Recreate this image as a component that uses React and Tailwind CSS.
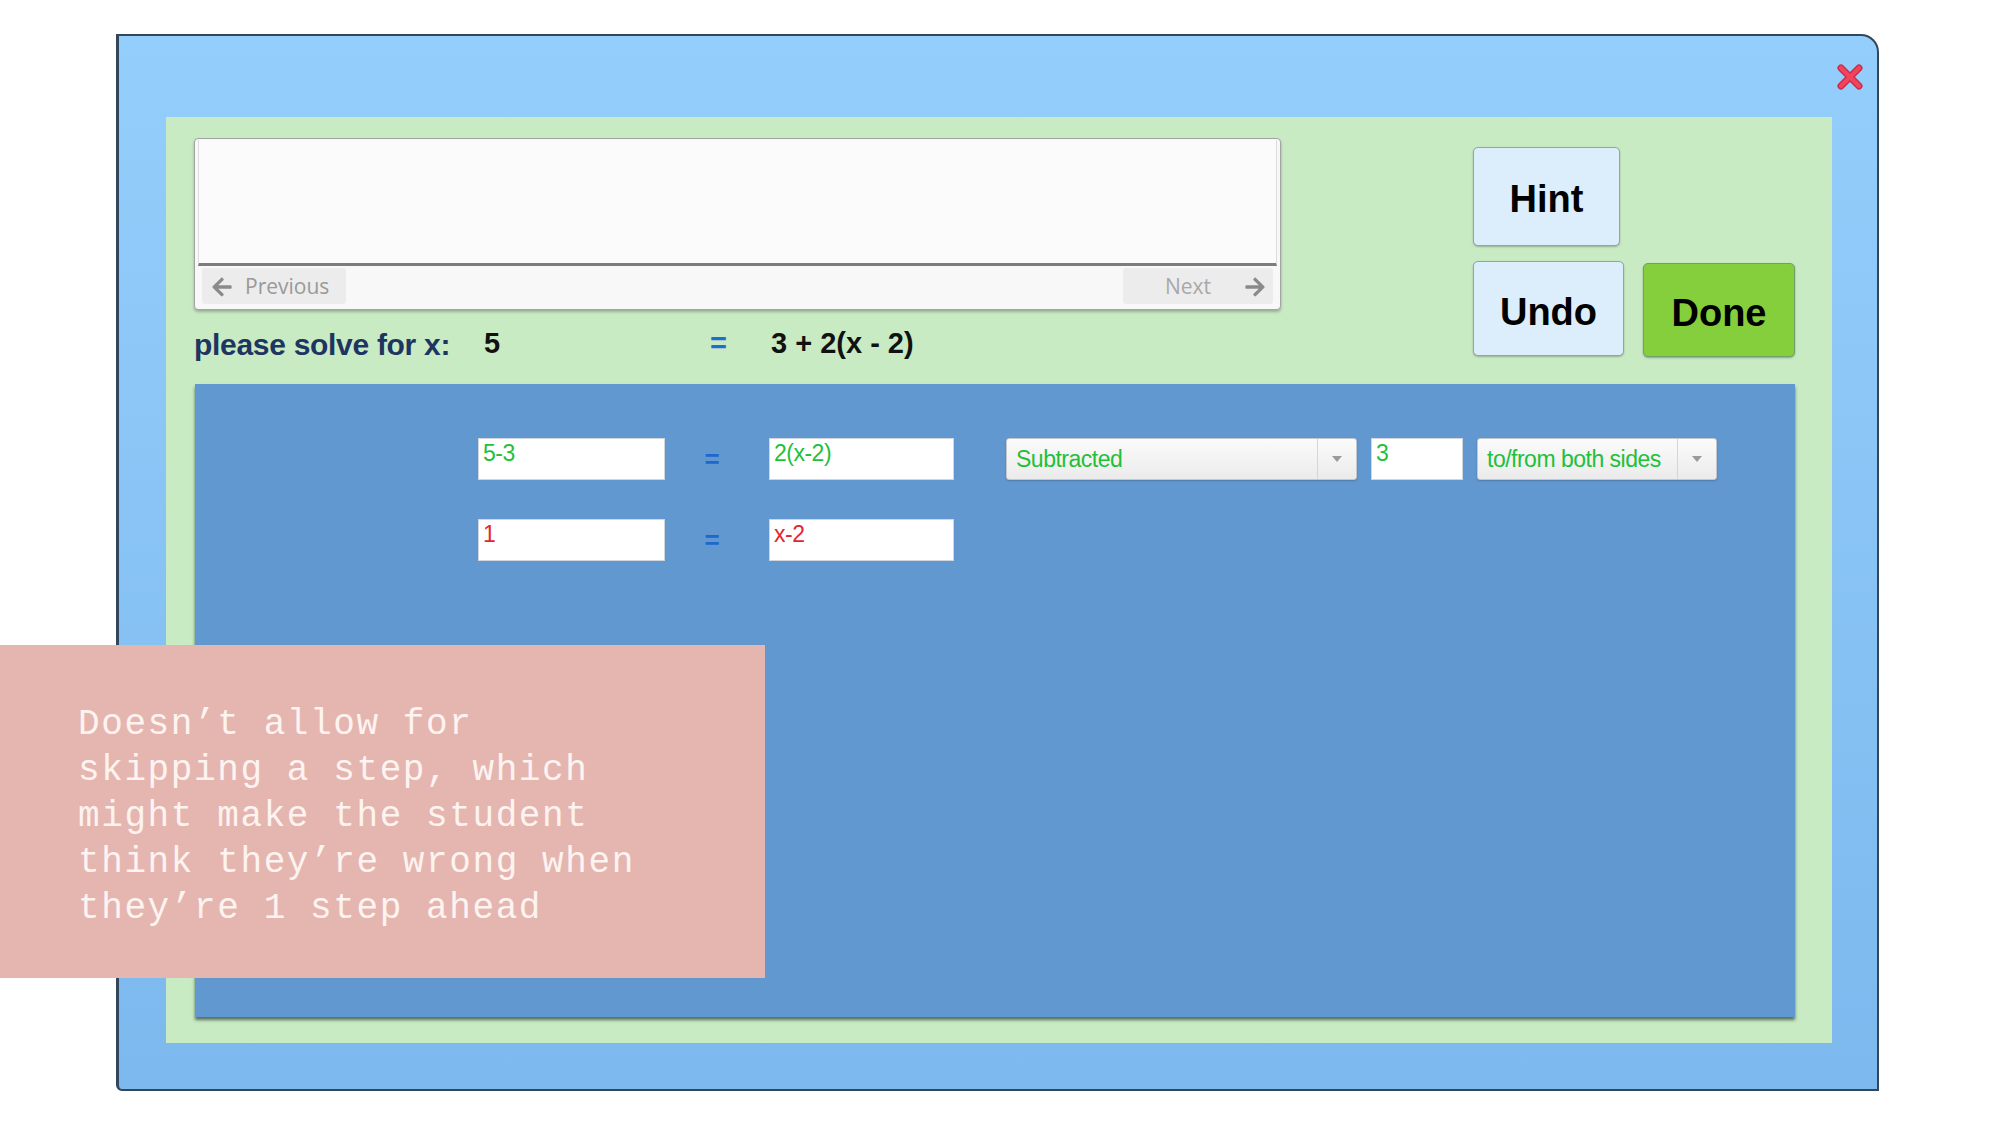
import { FaArrowLeft, FaArrowRight } from "react-icons/fa";

function Field({ w, text, color }) {
  return (
    <div
      className={`${w} h-[42px] shrink-0 bg-white border border-[#cfd6dd] pl-[4px] pt-[2px] text-[23px] leading-[25px] tracking-[-0.5px] font-['Liberation_Sans',sans-serif] ${color}`}
    >
      {text}
    </div>
  );
}

function Select({ w, text }) {
  return (
    <div
      className={`${w} h-[42px] shrink-0 flex items-stretch rounded-[3px] border border-[#c4c8cc] bg-linear-to-b from-[#fbfbfb] to-[#ebebeb] shadow-[0_1px_2px_rgba(0,0,0,0.2)]`}
    >
      <div className="flex-1 flex items-center pl-[9px] text-[23px] text-[#1fc03a] tracking-[-0.5px] font-['Liberation_Sans',sans-serif]">
        {text}
      </div>
      <div className="w-[39px] border-l border-[#d6d6d6] flex items-center justify-center">
        <svg width="10" height="6" viewBox="0 0 10 6">
          <path d="M0 0h10L5 6z" fill="#9a9a9a" />
        </svg>
      </div>
    </div>
  );
}

function Eq() {
  return (
    <div className="w-[104px] shrink-0 flex items-center justify-center pr-[10px] text-[26px] font-bold text-[#1f66cf] font-['Liberation_Sans',sans-serif]">
      =
    </div>
  );
}

export default function App() {
  return (
    <div className="relative w-[2000px] h-[1125px] bg-white overflow-hidden font-['Liberation_Sans',sans-serif]">
      {/* window */}
      <div className="relative ml-[116px] mt-[34px] w-[1763px] h-[1057px] border-2 border-l-[3px] border-[#33475a] rounded-tr-[18px] rounded-bl-[6px] bg-linear-to-b from-[#94cefc] to-[#7db8ee] pt-[81px] pl-[47px]">
        {/* close */}
        <div className="absolute right-[14px] top-[28px] w-[26px] h-[26px]">
          <svg width="26" height="26" viewBox="0 0 26 26">
            <path d="M4 4L22 22M22 4L4 22" stroke="#c92a45" strokeWidth="7" strokeLinecap="round" />
            <path d="M4 4L22 22M22 4L4 22" stroke="#f0435e" strokeWidth="4.5" strokeLinecap="round" />
          </svg>
        </div>

        {/* green panel */}
        <div className="w-[1666px] h-[926px] bg-[#c8ebc4] flex flex-col">
          {/* top */}
          <div className="h-[267px] flex items-start">
            <div className="ml-[28px] mt-[21px] flex flex-col">
              {/* text box */}
              <div className="w-[1087px] h-[172px] border border-[#a3a3a3] rounded-[4px] bg-[#f8f8f8] shadow-[0_2px_3px_rgba(0,0,0,0.25)] flex flex-col">
                <div className="mx-[3px] mt-[1px] h-[126px] bg-[#fbfbfb] border-l border-r border-[#dcdcdc] border-b-[3px] border-b-[#7c7c7c]" />
                <div className="flex justify-between px-[7px] pt-[2px]">
                  <div className="w-[144px] h-[36px] rounded-[3px] bg-[#ececec] flex items-center pl-[6px] pt-[2px] gap-[9px] text-[#999999] text-[21px] font-['Open_Sans',sans-serif]">
                    <FaArrowLeft className="text-[#8a8a8a] w-[28px] h-[22px]" />
                    <span>Previous</span>
                  </div>
                  <div className="w-[150px] h-[36px] rounded-[3px] bg-[#ececec] flex items-center justify-end pr-[4px] pt-[2px] gap-[30px] text-[#a8a8a8] text-[21px] font-['Open_Sans',sans-serif]">
                    <span>Next</span>
                    <FaArrowRight className="text-[#8a8a8a] w-[28px] h-[22px]" />
                  </div>
                </div>
              </div>
              {/* equation */}
              <div className="mt-[17px] h-[34px] flex items-center font-bold">
                <span className="w-[290px] text-[30px] text-[#1d3560] tracking-[-0.3px]">please solve for x:</span>
                <span className="w-[226px] text-[29px] text-[#111]">5</span>
                <span className="w-[61px] text-[29px] text-[#1f6fd2]">=</span>
                <span className="text-[29px] text-[#111]">3 + 2(x - 2)</span>
              </div>
            </div>

            {/* buttons */}
            <div className="ml-[192px] flex flex-col">
              <div className="mt-[30px] w-[147px] h-[99px] rounded-[5px] border border-[#8ea3b5] bg-[#dcedfb] shadow-[0_1px_2px_rgba(0,0,0,0.25)] flex items-center justify-center pt-[5px] text-[38px] font-bold text-black">
                Hint
              </div>
              <div className="mt-[15px] w-[151px] h-[95px] rounded-[5px] border border-[#8ea3b5] bg-[#dcedfb] shadow-[0_1px_2px_rgba(0,0,0,0.25)] flex items-center justify-center pt-[8px] text-[38px] font-bold text-black">
                Undo
              </div>
            </div>
            <div className="ml-[19px] mt-[146px] w-[152px] h-[94px] rounded-[5px] border border-[#6f9f6a] bg-[#85cf3c] shadow-[0_1px_2px_rgba(0,0,0,0.3)] flex items-center justify-center pt-[6px] text-[38px] font-bold text-black">
              Done
            </div>
          </div>

          {/* blue work area */}
          <div className="ml-[29px] w-[1600px] h-[633px] bg-[#6198d0] shadow-[0_3px_3px_rgba(40,60,50,0.7)] pt-[54px] pl-[283px] flex flex-col gap-[39px]">
            <div className="flex items-center">
              <Field w="w-[187px]" text="5-3" color="text-[#1fc03a]" />
              <Eq />
              <Field w="w-[185px]" text="2(x-2)" color="text-[#1fc03a]" />
              <div className="w-[52px] shrink-0" />
              <Select w="w-[351px]" text="Subtracted" />
              <div className="w-[14px] shrink-0" />
              <Field w="w-[92px]" text="3" color="text-[#1fc03a]" />
              <div className="w-[14px] shrink-0" />
              <Select w="w-[240px]" text="to/from both sides" />
            </div>
            <div className="flex items-center">
              <Field w="w-[187px]" text="1" color="text-[#e3262e]" />
              <Eq />
              <Field w="w-[185px]" text="x-2" color="text-[#e3262e]" />
            </div>
          </div>
        </div>
      </div>

      {/* pink note */}
      <div className="absolute left-0 top-[645px] w-[765px] h-[333px] bg-[#e5b6af] pl-[78px] pt-[57px]">
        <p className="text-[#fdf3f1] text-[36px] leading-[46px] tracking-[1.6px] font-['Liberation_Mono',monospace] whitespace-pre">
          {"Doesn’t allow for\nskipping a step, which\nmight make the student\nthink they’re wrong when\nthey’re 1 step ahead"}
        </p>
      </div>
    </div>
  );
}
